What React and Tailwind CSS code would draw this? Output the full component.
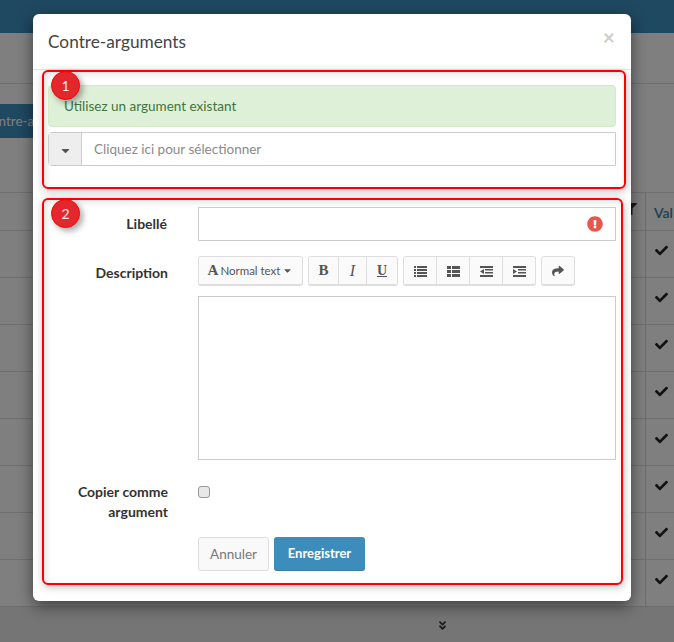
import React from 'react';
import { FaAngleDoubleDown, FaCaretDown, FaCheck, FaExclamationCircle, FaFilter, FaShare } from 'react-icons/fa';

const rows = [0, 1, 2, 3, 4, 5, 6, 7];

const ListIcon = () => (
  <svg width="13" height="12" viewBox="0 0 13 12" fill="currentColor">
    <rect x="0" y="1" width="2" height="2" />
    <rect x="3" y="1" width="10" height="2" />
    <rect x="0" y="4" width="2" height="2" />
    <rect x="3" y="4" width="10" height="2" />
    <rect x="0" y="7" width="2" height="2" />
    <rect x="3" y="7" width="10" height="2" />
    <rect x="0" y="10" width="2" height="2" />
    <rect x="3" y="10" width="10" height="2" />
  </svg>
);

const ThListIcon = () => (
  <svg width="13" height="12" viewBox="0 0 13 12" fill="currentColor">
    <rect x="0" y="1" width="4" height="3" />
    <rect x="5" y="1" width="8" height="3" />
    <rect x="0" y="5" width="4" height="3" />
    <rect x="5" y="5" width="8" height="3" />
    <rect x="0" y="9" width="4" height="3" />
    <rect x="5" y="9" width="8" height="3" />
  </svg>
);

const OutdentIcon = () => (
  <svg width="13" height="12" viewBox="0 0 13 12" fill="currentColor">
    <rect x="0" y="1" width="13" height="2" />
    <rect x="5" y="4" width="8" height="1.5" />
    <rect x="5" y="7" width="8" height="1.5" />
    <rect x="0" y="10" width="13" height="2" />
    <path d="M4 4v5L0 6.5z" />
  </svg>
);

const IndentIcon = () => (
  <svg width="13" height="12" viewBox="0 0 13 12" fill="currentColor">
    <rect x="0" y="1" width="13" height="2" />
    <rect x="5" y="4" width="8" height="1.5" />
    <rect x="5" y="7" width="8" height="1.5" />
    <rect x="0" y="10" width="13" height="2" />
    <path d="M0 4v5l4-2.5z" />
  </svg>
);

const Badge = ({ children }) => (
  <div className="absolute left-[7px] top-[-1px] w-[29px] h-[29px] rounded-full bg-[#e2282d] border border-[#ff0000] text-[#fbe9e9] text-[14px] flex items-center justify-center shadow-[3px_3px_6px_rgba(0,0,0,0.35)]">
    {children}
  </div>
);

const ToolButton = ({ children, className = '' }) => (
  <div className={`h-full flex items-center justify-center bg-[#fafafa] text-[#555] border-r border-[#dedede] last:border-r-0 ${className}`}>
    {children}
  </div>
);

const ToolGroup = ({ children }) => (
  <div className="h-[30px] flex border border-[#dedede] rounded-[3px] border-b-2 overflow-hidden">{children}</div>
);

const BackgroundPage = () => (
  <div className="h-full flex flex-col bg-white">
    <div className="h-[33px] shrink-0 bg-[#3e90c2]" />
    <div className="h-[51px] shrink-0 border-b border-[#ddd]" />
    <div className="h-[108px] shrink-0 pt-[20px]">
      <div className="w-[140px] h-[34px] -ml-[29px] pl-[11px] rounded bg-[#3e90c2] text-white text-[13.5px] whitespace-nowrap flex items-center">Contre-arguments</div>
    </div>
    <div className="h-[39px] shrink-0 border-y border-[#ddd] flex justify-end">
      <div className="w-[20px] pt-[10px] text-[#333] text-[12px]"><FaFilter /></div>
      <div className="w-[29px] border-l border-[#ddd] pl-[8px] pt-[9px] text-[14px] font-semibold text-[#3c7da8]">Val</div>
    </div>
    {rows.map((r) => (
      <div key={r} className="h-[47px] shrink-0 border-b border-[#ddd] flex justify-end">
        <div className="w-[29px] border-l border-[#ddd] pl-[9px] pt-[13px] text-[13px] text-[#222]"><FaCheck /></div>
      </div>
    ))}
    <div className="flex-1 bg-[#ebebeb] flex justify-center pl-[210px] pt-[13px] text-[11px] text-[#333]">
      <FaAngleDoubleDown />
    </div>
  </div>
);

const App = () => (
  <div className="relative w-[674px] h-[642px] overflow-hidden font-['Lato',sans-serif] text-[13.5px] text-[#333]">
    <BackgroundPage />
    <div className="absolute inset-0 bg-black/50" />

    {/* Modal */}
    <div className="absolute left-[33px] top-[14px] w-[598px] h-[587px] bg-white rounded-[6px] shadow-[0_5px_15px_rgba(0,0,0,0.5)]">
      <div className="h-[56px] pl-[15px] pr-[16px] border-b border-[#e5e5e5] flex items-center justify-between">
        <h4 className="text-[17.25px] leading-none text-[#444]">Contre-arguments</h4>
        <span className="text-[21px] font-bold leading-none text-[#cccccc] pb-[11px]">×</span>
      </div>

      {/* Bloc 1 */}
      <div className="relative ml-[9px] w-[584px] h-[119px] border-2 border-[#ff0000] rounded-[6px] shadow-[1px_2px_8px_rgba(0,0,0,0.25),inset_2px_2px_6px_rgba(0,0,0,0.12)] px-[4px] pt-[13px]">
        <Badge>1</Badge>
        <div className="h-[42px] w-[568px] bg-[#dff0d8] border border-[#d6e9c6] rounded-[4px] text-[#3c763d] pl-[15px] flex items-center">
          Utilisez un argument existant
        </div>
        <div className="mt-[5px] h-[34px] w-[568px] flex border border-[#ccc] rounded-l-[4px]">
          <div className="w-[33px] bg-[#eee] border-r border-[#ccc] flex items-center justify-center text-[#555] pt-[3px] text-[13px]">
            <FaCaretDown />
          </div>
          <div className="pl-[12px] flex items-center text-[#8a8a8a]">Cliquez ici pour sélectionner</div>
        </div>
      </div>

      {/* Bloc 2 */}
      <div className="relative mt-[9px] ml-[9px] w-[581px] h-[387px] border-2 border-[#ff0000] rounded-[6px] shadow-[1px_2px_8px_rgba(0,0,0,0.25),inset_2px_2px_6px_rgba(0,0,0,0.12)] pt-[7px]">
        <Badge>2</Badge>
        <div className="flex">
          <label className="w-[123px] text-[14px] text-right font-bold pt-[6px]">Libellé</label>
          <div className="ml-[31px] w-[418px] h-[34px] border border-[#ccc] flex items-center justify-end pr-[12px] text-[#e8574a] text-[16px]">
            <FaExclamationCircle />
          </div>
        </div>

        <div className="flex mt-[15px]">
          <label className="w-[124px] text-[14px] text-right font-bold pt-[6px]">Description</label>
          <div className="ml-[30px] w-[418px]">
            <div className="flex gap-[5px]">
              <ToolGroup>
                <ToolButton className="w-[103px] gap-[2px] text-[11.5px]">
                  <span className="font-['Liberation_Serif',serif] font-bold text-[15px] leading-none">A</span>
                  Normal text
                  <FaCaretDown className="text-[11px]" />
                </ToolButton>
              </ToolGroup>
              <ToolGroup>
                <ToolButton className="w-[30px] font-['Liberation_Serif',serif] font-bold text-[15px]">B</ToolButton>
                <ToolButton className="w-[28px] font-['Liberation_Serif',serif] italic text-[16px]">I</ToolButton>
                <ToolButton className="w-[30px] font-['Liberation_Serif',serif] underline font-bold text-[14px]">U</ToolButton>
              </ToolGroup>
              <ToolGroup>
                <ToolButton className="w-[33px]"><ListIcon /></ToolButton>
                <ToolButton className="w-[33px]"><ThListIcon /></ToolButton>
                <ToolButton className="w-[33px]"><OutdentIcon /></ToolButton>
                <ToolButton className="w-[32px]"><IndentIcon /></ToolButton>
              </ToolGroup>
              <ToolGroup>
                <ToolButton className="w-[32px] text-[12px]"><FaShare /></ToolButton>
              </ToolGroup>
            </div>
            <div className="mt-[10px] h-[164px] border border-[#ccc]" />
          </div>
        </div>

        <div className="flex mt-[22px]">
          <label className="w-[124px] text-[14px] text-right font-bold leading-[20px]">Copier comme argument</label>
          <div className="ml-[30px] mt-[4px] w-[12px] h-[12px] rounded-[3px] bg-[#e8e8e8] border border-[#999]" />
        </div>

        <div className="flex gap-[5px] ml-[154px] mt-[15px]">
          <div className="w-[71px] h-[34px] flex items-center justify-center bg-[#f9f9f9] border border-[#ddd] rounded-[3px] text-[#777]">Annuler</div>
          <div className="w-[91px] h-[34px] flex items-center justify-center bg-[#3c8dbc] border-b border-[#367fa9] rounded-[3px] text-white text-[13px] font-bold">Enregistrer</div>
        </div>
      </div>
    </div>
  </div>
);

export default App;
